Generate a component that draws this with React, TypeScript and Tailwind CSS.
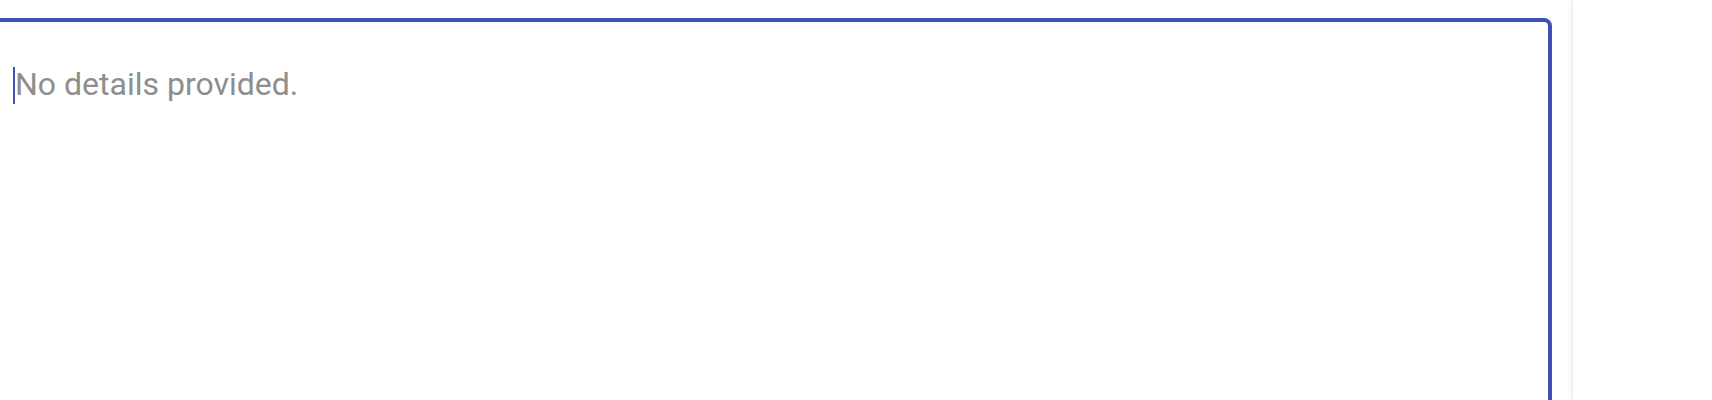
import React from 'react';

const App: React.FC = () => {
  return (
    <div className="flex h-[400px] w-[1712px] overflow-hidden bg-white font-['Roboto','Liberation_Sans',sans-serif]">
      {/* main editor column */}
      <div className="w-[1572px] shrink-0 overflow-hidden pt-[18px] pr-[20px]">
        <div className="-ml-[20px] h-[420px] rounded-[8px] border-4 border-[#3f51b5] pl-[29px] pt-[44px]">
          <div className="flex items-start text-[32px] leading-[37px] text-[#8e8e8e]">
            <span className="-mr-[2px] mt-[1px] inline-block h-[37px] w-[2px] bg-[#3f51b5]" />
            <span className="pl-[2px]">No details provided.</span>
          </div>
        </div>
      </div>

      {/* side panel */}
      <div className="flex-1 border-l border-[#ececec] bg-white shadow-[-3px_0_4px_rgba(0,0,0,0.03)]" />
    </div>
  );
};

export default App;
